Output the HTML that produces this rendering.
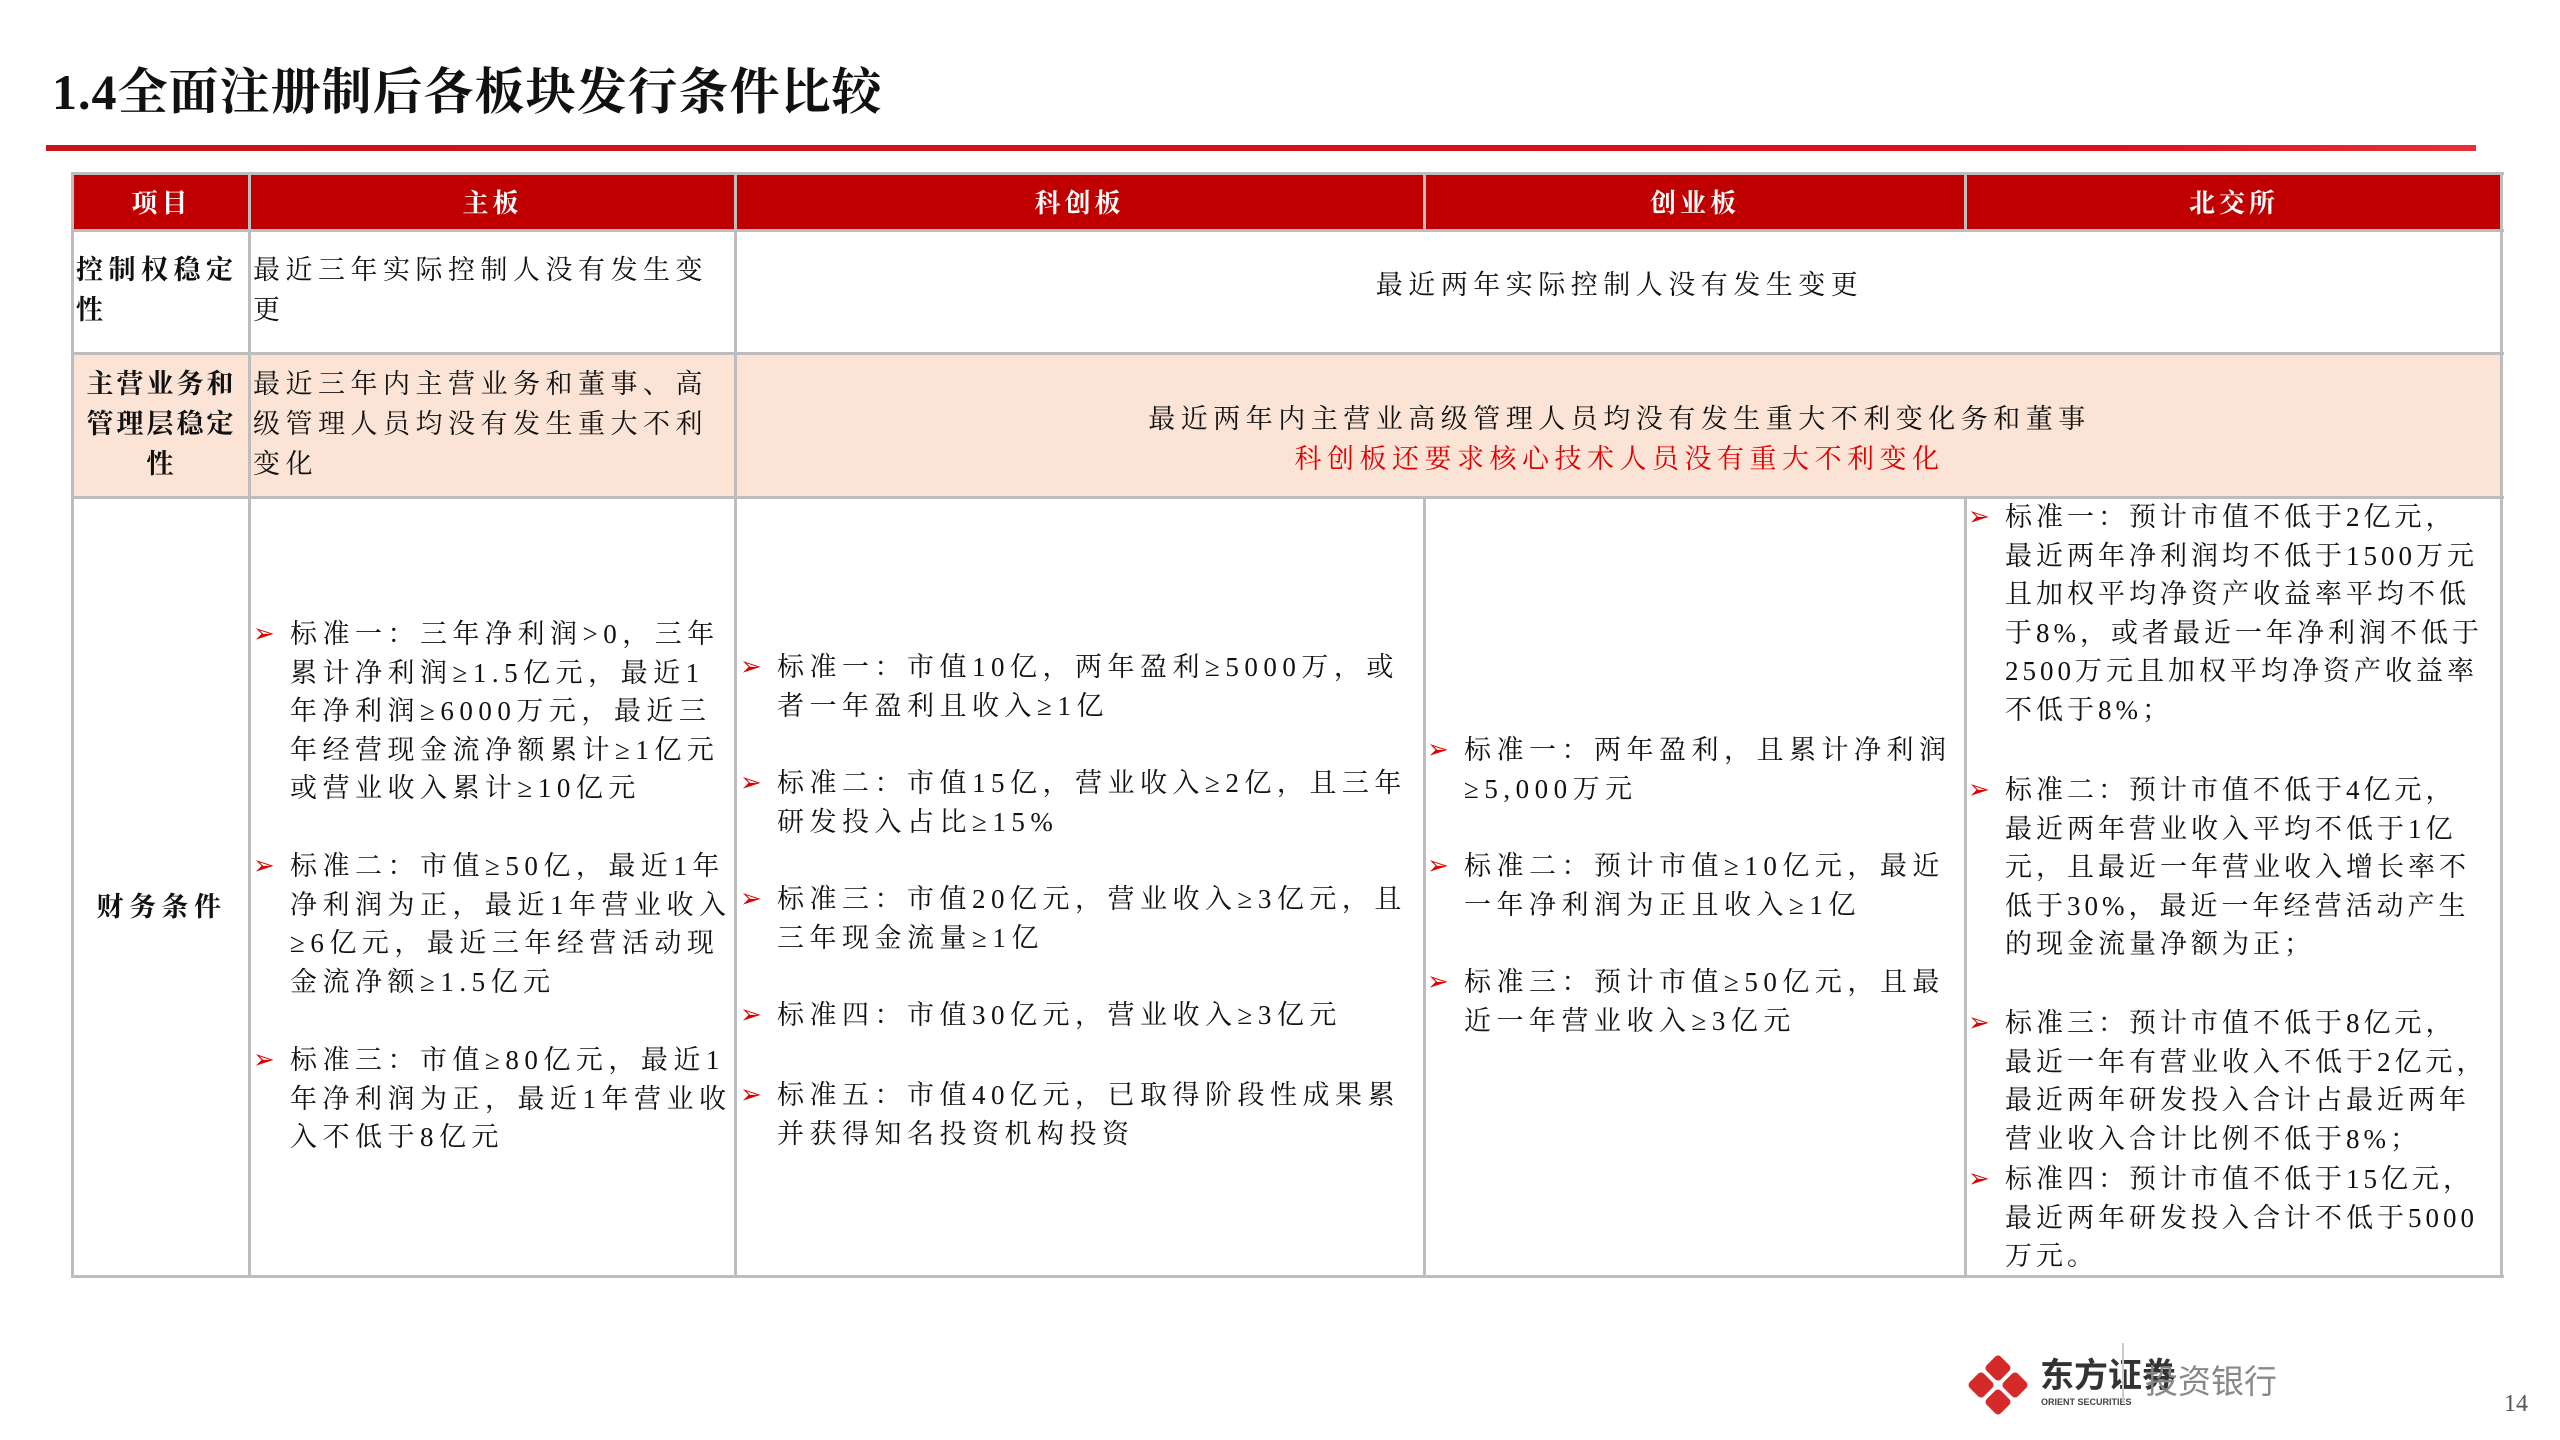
<!DOCTYPE html>
<html><head><meta charset="utf-8"><style>
*{margin:0;padding:0;box-sizing:border-box}
body{width:2560px;height:1440px;background:#fff;position:relative;overflow:hidden;font-family:"Liberation Serif","Noto Serif CJK SC",serif;color:#111}
.a{position:absolute;white-space:nowrap}
.t{font-size:27px;letter-spacing:5.5px;line-height:40px}
.b{font-size:27px;letter-spacing:5.5px;line-height:38.6px}
.b i{font-style:normal;position:absolute;left:-37px;color:#e00000;font-family:"DejaVu Sans",sans-serif;font-size:26px}
.v{position:absolute;background:#bdbdbd}
.h{color:#fff;font-weight:bold;font-size:26px;letter-spacing:4px;line-height:56px;text-align:center}
</style></head><body>
<div class="a" style="left:52px;top:62px;font-size:50px;font-weight:bold;line-height:60px;letter-spacing:1px">1.4全面注册制后各板块发行条件比较</div>
<div class="a" style="left:46px;top:145px;width:2430px;height:6px;background:linear-gradient(90deg,#c8141c,#e0101a 85%,#e8303a)"></div>

<!-- table backgrounds -->
<div class="a" style="left:73px;top:174px;width:2429px;height:56px;background:#c00000"></div>
<div class="a" style="left:73px;top:353px;width:2429px;height:144px;background:#fbe4d6"></div>
<!-- borders -->
<div class="v" style="left:71px;top:172px;width:2433px;height:3px"></div>
<div class="v" style="left:71px;top:229px;width:2433px;height:3px"></div>
<div class="v" style="left:71px;top:352px;width:2433px;height:3px"></div>
<div class="v" style="left:71px;top:496px;width:2433px;height:3px"></div>
<div class="v" style="left:71px;top:1275px;width:2433px;height:3px"></div>
<div class="v" style="left:71px;top:172px;width:3px;height:1106px"></div>
<div class="v" style="left:248px;top:172px;width:3px;height:1106px"></div>
<div class="v" style="left:734px;top:172px;width:3px;height:1106px"></div>
<div class="v" style="left:1423px;top:172px;width:3px;height:59px"></div>
<div class="v" style="left:1423px;top:497px;width:3px;height:780px"></div>
<div class="v" style="left:1964px;top:172px;width:3px;height:59px"></div>
<div class="v" style="left:1964px;top:497px;width:3px;height:780px"></div>
<div class="v" style="left:2500px;top:172px;width:3px;height:1106px"></div>

<!-- header -->
<div class="a h" style="left:73px;top:176px;width:177px">项目</div>
<div class="a h" style="left:250px;top:176px;width:485px">主板</div>
<div class="a h" style="left:735px;top:176px;width:689px">科创板</div>
<div class="a h" style="left:1424px;top:176px;width:542px">创业板</div>
<div class="a h" style="left:1966px;top:176px;width:536px">北交所</div>

<!-- row1 -->
<div class="a t" style="left:76px;top:250px;font-weight:bold">控制权稳定<br>性</div>
<div class="a t" style="left:253px;top:250px">最近三年实际控制人没有发生变<br>更</div>
<div class="a t" style="left:737px;top:265px;width:1765px;text-align:center">最近两年实际控制人没有发生变更</div>

<!-- row2 -->
<div class="a t" style="left:73px;top:364px;width:177px;text-align:center;font-weight:bold;letter-spacing:3px">主营业务和<br>管理层稳定<br>性</div>
<div class="a t" style="left:253px;top:364px">最近三年内主营业务和董事、高<br>级管理人员均没有发生重大不利<br>变化</div>
<div class="a t" style="left:737px;top:399px;width:1765px;text-align:center">最近两年内主营业高级管理人员均没有发生重大不利变化务和董事<br><span style="color:#e00000">科创板还要求核心技术人员没有重大不利变化</span></div>

<!-- row3 -->
<div class="a t" style="left:73px;top:887px;width:177px;text-align:center;font-weight:bold">财务条件</div>

<div class="a b" style="left:290px;top:615px"><i>➢</i>标准一：三年净利润&gt;0，三年<br>累计净利润≥1.5亿元，最近1<br>年净利润≥6000万元，最近三<br>年经营现金流净额累计≥1亿元<br>或营业收入累计≥10亿元</div>
<div class="a b" style="left:290px;top:847px"><i>➢</i>标准二：市值≥50亿，最近1年<br>净利润为正，最近1年营业收入<br>≥6亿元，最近三年经营活动现<br>金流净额≥1.5亿元</div>
<div class="a b" style="left:290px;top:1041px"><i>➢</i>标准三：市值≥80亿元，最近1<br>年净利润为正，最近1年营业收<br>入不低于8亿元</div>

<div class="a b" style="left:777px;top:648px"><i>➢</i>标准一：市值10亿，两年盈利≥5000万，或<br>者一年盈利且收入≥1亿</div>
<div class="a b" style="left:777px;top:764px"><i>➢</i>标准二：市值15亿，营业收入≥2亿，且三年<br>研发投入占比≥15%</div>
<div class="a b" style="left:777px;top:880px"><i>➢</i>标准三：市值20亿元，营业收入≥3亿元，且<br>三年现金流量≥1亿</div>
<div class="a b" style="left:777px;top:996px"><i>➢</i>标准四：市值30亿元，营业收入≥3亿元</div>
<div class="a b" style="left:777px;top:1076px"><i>➢</i>标准五：市值40亿元，已取得阶段性成果累<br>并获得知名投资机构投资</div>

<div class="a b" style="left:1464px;top:731px"><i>➢</i>标准一：两年盈利，且累计净利润<br>≥5,000万元</div>
<div class="a b" style="left:1464px;top:847px"><i>➢</i>标准二：预计市值≥10亿元，最近<br>一年净利润为正且收入≥1亿</div>
<div class="a b" style="left:1464px;top:963px"><i>➢</i>标准三：预计市值≥50亿元，且最<br>近一年营业收入≥3亿元</div>

<div class="a b" style="left:2005px;top:498px;letter-spacing:4px"><i>➢</i>标准一：预计市值不低于2亿元，<br>最近两年净利润均不低于1500万元<br>且加权平均净资产收益率平均不低<br>于8%，或者最近一年净利润不低于<br>2500万元且加权平均净资产收益率<br>不低于8%；</div>
<div class="a b" style="left:2005px;top:771px;letter-spacing:4px"><i>➢</i>标准二：预计市值不低于4亿元，<br>最近两年营业收入平均不低于1亿<br>元，且最近一年营业收入增长率不<br>低于30%，最近一年经营活动产生<br>的现金流量净额为正；</div>
<div class="a b" style="left:2005px;top:1004px;letter-spacing:4px"><i>➢</i>标准三：预计市值不低于8亿元，<br>最近一年有营业收入不低于2亿元，<br>最近两年研发投入合计占最近两年<br>营业收入合计比例不低于8%；</div>
<div class="a b" style="left:2005px;top:1160px;letter-spacing:4px"><i>➢</i>标准四：预计市值不低于15亿元，<br>最近两年研发投入合计不低于5000<br>万元。</div>

<!-- logo -->
<svg class="a" style="left:1968px;top:1355px" width="60" height="60" viewBox="0 0 60 60">
<g fill="#d42a2a" transform="rotate(45 30 30)">
<rect x="8" y="8" width="20" height="20" rx="4"/><rect x="32" y="8" width="20" height="20" rx="4"/>
<rect x="8" y="32" width="20" height="20" rx="4"/><rect x="32" y="32" width="20" height="20" rx="4"/></g></svg>
<div class="a" style="left:2040px;top:1356px;font-family:'Liberation Sans','Noto Sans CJK SC',sans-serif;font-weight:bold;font-size:34px;color:#333;line-height:40px">东方证券</div>
<div class="a" style="left:2041px;top:1397px;font-family:'Liberation Sans',sans-serif;font-weight:bold;font-size:9px;color:#444">ORIENT SECURITIES</div>
<div class="a" style="left:2122px;top:1343px;width:2px;height:60px;background:#ccc"></div>
<div class="a" style="left:2145px;top:1362px;font-family:'Liberation Sans','Noto Sans CJK SC',sans-serif;font-size:33px;color:#888;line-height:40px">投资银行</div>
<div class="a" style="left:2504px;top:1391px;font-size:24px;color:#555">14</div>
</body></html>
